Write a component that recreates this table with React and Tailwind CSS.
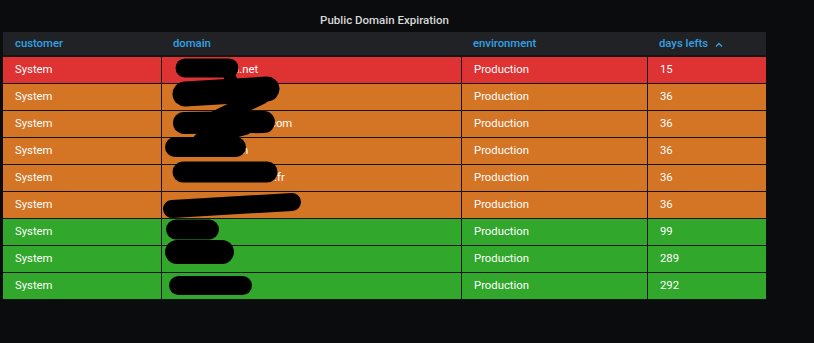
import React from 'react';

const rows = [
  { customer: 'System', domain: 'n.net', pad: 'pl-[71px]', env: 'Production', days: 15, color: 'bg-[#df3232]' },
  { customer: 'System', domain: '', pad: 'pl-[11px]', env: 'Production', days: 36, color: 'bg-[#d47425]' },
  { customer: 'System', domain: 'com', pad: 'pl-[108px]', env: 'Production', days: 36, color: 'bg-[#d47425]' },
  { customer: 'System', domain: 'n', pad: 'pl-[80px]', env: 'Production', days: 36, color: 'bg-[#d47425]' },
  { customer: 'System', domain: '.fr', pad: 'pl-[112px]', env: 'Production', days: 36, color: 'bg-[#d47425]' },
  { customer: 'System', domain: '', pad: 'pl-[11px]', env: 'Production', days: 36, color: 'bg-[#d47425]' },
  { customer: 'System', domain: '', pad: 'pl-[11px]', env: 'Production', days: 99, color: 'bg-[#31a72c]' },
  { customer: 'System', domain: '', pad: 'pl-[11px]', env: 'Production', days: 289, color: 'bg-[#31a72c]' },
  { customer: 'System', domain: '', pad: 'pl-[11px]', env: 'Production', days: 292, color: 'bg-[#31a72c]' },
];

// black marker strokes hiding the domain names (page coordinates)
const scribbles = [
  { d: 'M185,68 L229,68', w: 19 },
  { d: 'M228,72 L232,82', w: 12 },
  { d: 'M185,94 L267,89', w: 25 },
  { d: 'M262,96 L205,124', w: 16 },
  { d: 'M184,123 L264,122', w: 22 },
  { d: 'M245,128 L200,140', w: 14 },
  { d: 'M175,147 L236,147', w: 20 },
  { d: 'M183,172 L267,172', w: 21 },
  { d: 'M172,209 L292,202', w: 18 },
  { d: 'M176,229.5 L209,229.5', w: 20 },
  { d: 'M177,252 L222,252', w: 24 },
  { d: 'M178.5,285.5 L242.5,285.5', w: 19 },
];

const App = () => {
  return (
    <div className="w-[814px] h-[343px] bg-[#0b0c0e] font-['Roboto',sans-serif] text-[11.3px] overflow-hidden">
      <div className="w-[763px] ml-[3px]">
        {/* Titre du panneau */}
        <div className="h-[32px] pt-[13px] text-center leading-[14px] font-medium text-[#d8d9da] text-[11.5px]">
          Public Domain Expiration
        </div>

        <div className="relative">
          {/* En-tête */}
          <div className="flex h-[23px] pt-[2px] items-center bg-[#202226] text-[#33a2e5] font-medium">
            <div className="w-[159px] pl-3">customer</div>
            <div className="w-[300px] pl-[11px]">domain</div>
            <div className="w-[186px] pl-[11px]">environment</div>
            <div className="w-[118px] pl-[11px] flex items-center gap-[7px]">
              days lefts
              <svg width="8" height="6" viewBox="0 0 8 6" fill="none" stroke="#33a2e5" strokeWidth="1.4">
                <path d="M1 4.5 L4 1.5 L7 4.5" />
              </svg>
            </div>
          </div>
          <div className="h-[2px] bg-[#141619]" />

          {/* Lignes */}
          {rows.map((r, i) => (
            <div key={i} className={`flex h-[27px] border-b border-[#141619] text-white ${r.color}`}>
              <div className="w-[159px] pl-3 flex items-center border-r border-[#141619]">{r.customer}</div>
              <div className={`w-[300px] flex items-center border-r border-[#141619] ${r.pad}`}>{r.domain}</div>
              <div className="w-[186px] pl-3 flex items-center border-r border-[#141619]">{r.env}</div>
              <div className="w-[118px] pl-3 flex items-center">{r.days}</div>
            </div>
          ))}

          <svg
            className="absolute left-[-3px] top-[-32px] pointer-events-none"
            width="814"
            height="343"
            viewBox="0 0 814 343"
            fill="none"
          >
            {scribbles.map((s, i) => (
              <path key={i} d={s.d} stroke="#000" strokeWidth={s.w} strokeLinecap="round" />
            ))}
          </svg>
        </div>
      </div>
    </div>
  );
};

export default App;
